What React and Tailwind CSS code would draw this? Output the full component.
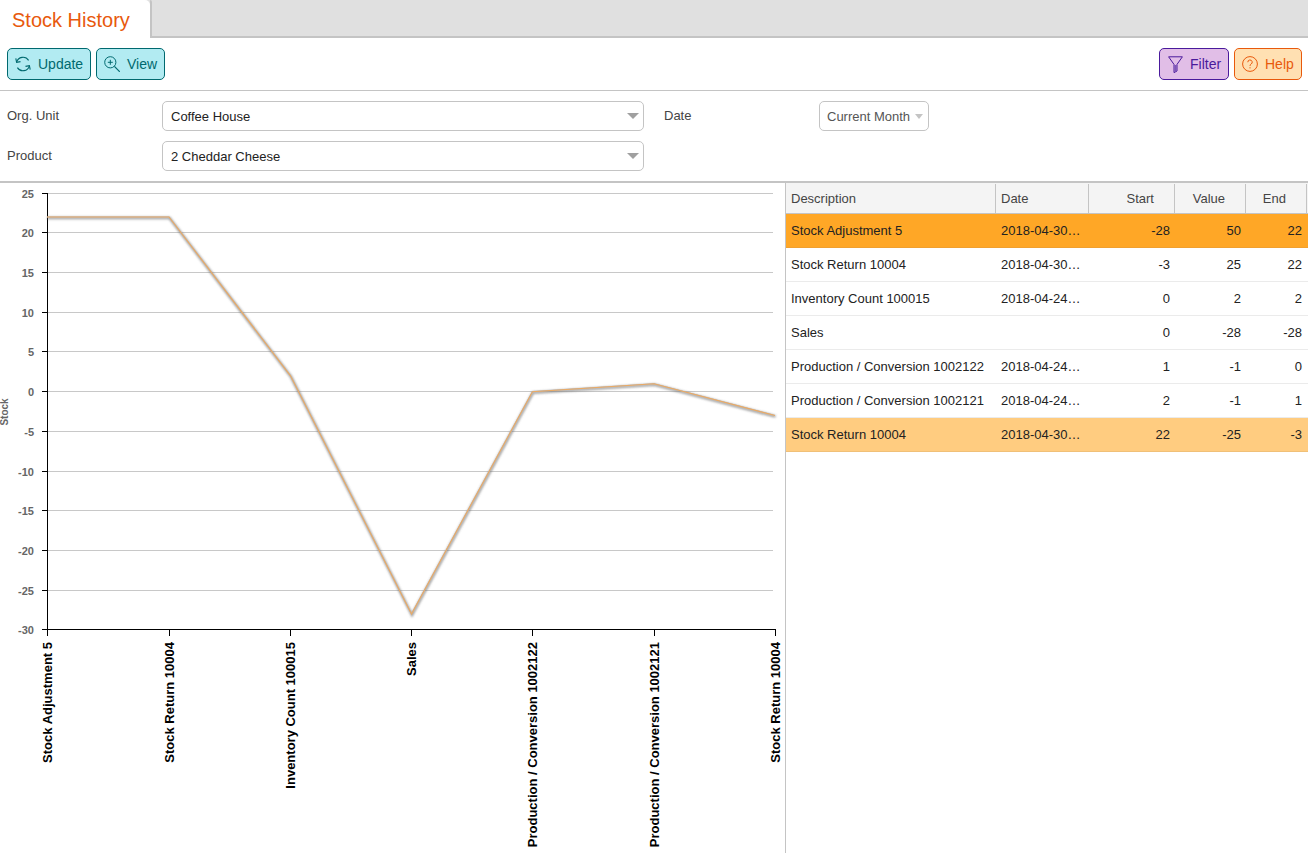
import React from "react";

const ticks = [25, 20, 15, 10, 5, 0, -5, -10, -15, -20, -25, -30];
const yOf = (v) => 192.6 + (25 - v) * 7.94;
const xs = [47, 169, 290.5, 411.5, 532.5, 654, 775];
const vals = [22, 22, 2, -28, 0, 1, -3];
const labels = [
  "Stock Adjustment 5",
  "Stock Return 10004",
  "Inventory Count 100015",
  "Sales",
  "Production / Conversion 1002122",
  "Production / Conversion 1002121",
  "Stock Return 10004",
];
const pts = xs.map((x, i) => `${x},${yOf(vals[i]) + 0.6}`).join(" ");
const OFFSET = 183;

function Chart() {
  return (
    <svg width="785" height="670" viewBox={`0 ${OFFSET} 785 670`} className="block">
      <defs>
        <filter id="blur" x="-5%" y="-5%" width="110%" height="110%">
          <feGaussianBlur stdDeviation="1" />
        </filter>
      </defs>
      {ticks.map((t) => (
        <g key={t}>
          {t !== -30 && <line x1="47" x2="773" y1={Math.round(yOf(t)) + 0.5} y2={Math.round(yOf(t)) + 0.5} stroke="#c8c8c8" strokeWidth="1" />}
          <line x1="42" x2="47" y1={Math.round(yOf(t)) + 0.5} y2={Math.round(yOf(t)) + 0.5} stroke="#000" strokeWidth="1" />
          <text x="34" y={yOf(t) + 5} textAnchor="end" fontSize="11" fontWeight="700" fill="#666" fontFamily="Liberation Sans">{t}</text>
        </g>
      ))}
      <text transform="translate(8,412) rotate(-90)" textAnchor="middle" fontSize="10" fontWeight="700" fill="#666" fontFamily="Liberation Sans">Stock</text>
      <line x1="47.5" x2="47.5" y1="193" y2="630" stroke="#000" />
      <line x1="47" x2="775" y1="629.5" y2="629.5" stroke="#000" />
      {xs.map((x, i) => (
        <g key={i}>
          <line x1={Math.floor(x) + 0.5} x2={Math.floor(x) + 0.5} y1="629" y2="636" stroke="#000" />
          <text transform={`translate(${Math.floor(x) + 4.5},642) rotate(-90)`} textAnchor="end" fontSize="13" fontWeight="700" fill="#000" fontFamily="Liberation Sans">{labels[i]}</text>
        </g>
      ))}
      <polyline points={pts} fill="none" stroke="#707070" strokeOpacity="0.65" strokeWidth="2.6" filter="url(#blur)" transform="translate(0.5,1)" />
      <polyline points={pts} fill="none" stroke="#b0b6c0" strokeWidth="1.2" />
      <polyline points={pts} fill="none" stroke="#ecaa62" strokeWidth="1.1" />
    </svg>
  );
}

const UpdateIcon = () => (
  <svg width="16" height="16" viewBox="0 0 16 16" fill="none" stroke="#00696f" strokeWidth="1.1">
    <path d="M1.6 6.2A6.6 6.6 0 0 1 13.6 4.4" />
    <path d="M14.4 9.8A6.6 6.6 0 0 1 2.4 11.6" />
    <path d="M0.8 2.4l.8 3.9 3.9-.7" />
    <path d="M15.2 13.6l-.8-3.9-3.9.7" />
  </svg>
);
const ViewIcon = () => (
  <svg width="16" height="16" viewBox="0 0 16 16" fill="none" stroke="#00696f" strokeWidth="1">
    <circle cx="6.3" cy="6.3" r="5.6" />
    <path d="M6.3 3.8v5M3.8 6.3h5" />
    <path d="M10.4 10.4L15.8 15.8" strokeWidth="1.2" />
  </svg>
);
const FilterIcon = () => (
  <svg width="15" height="17" viewBox="0 0 15 17" fill="none" stroke="#4a1a9c" strokeWidth="1">
    <path d="M0.6 0.8h13.8L9 8.4v6.6l-3 1.6V8.4z" />
    <path d="M6.4 9v7l2.2-1.2V9z" fill="#7d55b8" stroke="none" />
  </svg>
);
const HelpIcon = () => (
  <svg width="16" height="16" viewBox="0 0 16 16" fill="none" stroke="#e8590c" strokeWidth="1">
    <circle cx="8" cy="8" r="7.4" />
    <path d="M5.8 6.2a2.2 2.2 0 1 1 3.3 1.9c-.8.5-1.1.9-1.1 1.8" />
    <path d="M8 11.2v1.2" />
  </svg>
);

function Btn({ children, cls, w }) {
  return (
    <div className={`flex items-center gap-[7px] h-8 rounded-[5px] border text-sm ${cls} ${w}`}>{children}</div>
  );
}

function Select({ text, w, small }) {
  return (
    <div className={`flex items-center justify-between shrink-0 h-[30px] border border-[#c4c4c4] rounded-[5px] bg-white whitespace-nowrap ${w} ${small ? "pl-[7px] pr-[5px] text-[#555]" : "pl-2 pr-1 text-[#222]"} text-[13px]`}>
      <span className="pt-px">{text}</span>
      {small ? (
        <span className="w-0 h-0 border-l-[4px] border-r-[4px] border-t-[5px] border-l-transparent border-r-transparent border-t-[#c4c4c4] mt-[1px]" />
      ) : (
        <span className="w-0 h-0 border-l-[6px] border-r-[6px] border-t-[6px] border-l-transparent border-r-transparent border-t-[#a0a0a0]" />
      )}
    </div>
  );
}

const rows = [
  ["Stock Adjustment 5", "2018-04-30…", "-28", "50", "22", "bg-[#ffa726] border-[#f0a030]"],
  ["Stock Return 10004", "2018-04-30…", "-3", "25", "22", "bg-white border-[#ebebeb]"],
  ["Inventory Count 100015", "2018-04-24…", "0", "2", "2", "bg-white border-[#ebebeb]"],
  ["Sales", "", "0", "-28", "-28", "bg-white border-[#ebebeb]"],
  ["Production / Conversion 1002122", "2018-04-24…", "1", "-1", "0", "bg-white border-[#ebebeb]"],
  ["Production / Conversion 1002121", "2018-04-24…", "2", "-1", "1", "bg-white border-[#ebebeb]"],
  ["Stock Return 10004", "2018-04-30…", "22", "-25", "-3", "bg-[#ffcc80] border-[#f0c078]"],
];

const colCls = ["w-[210px] pl-[5px]", "w-[93px] pl-[5px]", "w-[86px] pr-[5px] justify-end", "w-[71px] pr-[5px] justify-end", "w-[61px] pr-[5px] justify-end"];

function Table() {
  return (
    <div className="flex-1 flex flex-col text-[13px] min-w-0">
      <div className="flex h-[31px] pt-px bg-[#f4f4f4] border-b border-[#c4c4c4] text-[#444]">
        <div className="w-[210px] pl-[5px] flex items-center border-r border-[#c4c4c4]">Description</div>
        <div className="w-[93px] pl-[5px] flex items-center border-r border-[#c4c4c4]">Date</div>
        <div className="w-[86px] pr-[20px] flex items-center justify-end border-r border-[#c4c4c4]">Start</div>
        <div className="w-[71px] pr-[20px] flex items-center justify-end border-r border-[#c4c4c4]">Value</div>
        <div className="w-[61px] pr-[20px] flex items-center justify-end border-r border-[#c4c4c4]">End</div>
      </div>
      {rows.map((r, i) => (
        <div key={i} className={`flex h-[34px] w-[522px] border-b text-[#222] ${r[5]}`}>
          {[0, 1, 2, 3, 4].map((c) => (
            <div key={c} className={`flex items-center whitespace-nowrap ${colCls[c]}`}>{r[c]}</div>
          ))}
        </div>
      ))}
    </div>
  );
}

export default function App() {
  return (
    <div className="w-[1308px] h-[853px] overflow-hidden bg-white flex flex-col font-[Arial,sans-serif]">
      <div className="h-[38px] flex bg-[#e0e0e0] border-b-2 border-[#c4c4c4]">
        <div className="w-[150px] h-[38px] bg-white pl-3 pt-[2px] flex items-center text-[20px] text-[#e8590c] rounded-tr-[5px]">Stock History</div>
        <div className="w-[2px] h-[36px] bg-[#c4c4c4] rounded-tr-[4px]" />
      </div>
      <div className="h-[53px] flex items-start justify-between pl-[7px] pr-[6px] pt-[10px] border-b border-[#c4c4c4]">
        <div className="flex gap-[5px]">
          <Btn w="w-[84px] pl-[7px]" cls="bg-[#b2ebf2] border-[#00696f] text-[#00696f]"><UpdateIcon />Update</Btn>
          <Btn w="w-[69px] pl-[7px]" cls="bg-[#b2ebf2] border-[#00696f] text-[#00696f]"><ViewIcon />View</Btn>
        </div>
        <div className="flex gap-[5px]">
          <Btn w="w-[70px] pl-[8px]" cls="bg-[#e1bee7] border-[#4a1a9c] text-[#4a1a9c]"><FilterIcon />Filter</Btn>
          <Btn w="w-[68px] pl-[7px]" cls="bg-[#ffe0b2] border-[#e8590c] text-[#e8590c]"><HelpIcon />Help</Btn>
        </div>
      </div>
      <div className="h-[92px] border-b-2 border-[#c4c4c4] pl-[7px] pt-[10px] text-[13px] text-[#444]">
        <div className="flex items-start h-[40px]">
          <div className="w-[155px] pt-[5px]">Org. Unit</div>
          <Select text="Coffee House" w="w-[482px]" />
          <div className="w-[155px] pl-[20px] pt-[5px] box-content shrink-0">Date</div>
          <Select text="Current Month" w="w-[110px]" small />
        </div>
        <div className="flex items-start h-[40px]">
          <div className="w-[155px] pt-[5px]">Product</div>
          <Select text="2 Cheddar Cheese" w="w-[482px]" />
        </div>
      </div>
      <div className="flex-1 flex min-h-0">
        <div className="w-[786px] shrink-0 border-r border-[#c4c4c4]">
          <Chart />
        </div>
        <Table />
      </div>
    </div>
  );
}
